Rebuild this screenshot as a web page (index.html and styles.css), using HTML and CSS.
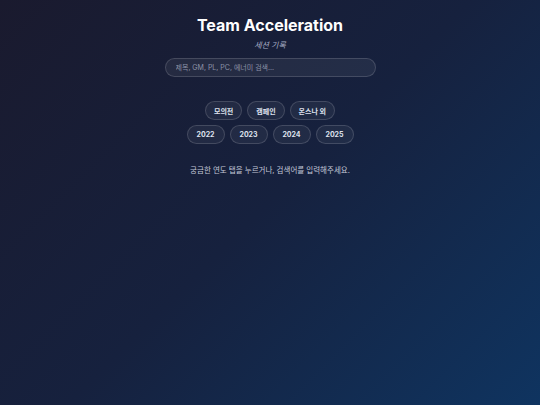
FILE: index.html
```html
<!DOCTYPE html>
<html lang="ko">
  <head>
    <meta charset="UTF-8" />
    <meta name="viewport" content="width=device-width, initial-scale=1.0" />
    <title>Team Acceleration</title>
    <link rel="stylesheet" href="styles.css">
  </head>
  <body>
    <div class="container">
      <h1>Team Acceleration</h1>
      <p class="subtitle">세션 기록</p>
      <input
        type="text"
        class="search"
        placeholder="제목, GM, PL, PC, 에너미 검색..."
      />

      <div class="tabs">
        <button class="tab">모의전</button>
        <button class="tab">캠페인</button>
        <button class="tab">몬스나 외</button>
      </div>
      <div class="tabs">
        <button class="tab">2022</button>
        <button class="tab">2023</button>
        <button class="tab">2024</button>
        <button class="tab">2025</button>
      </div>

      <p class="message">궁금한 연도 탭을 누르거나, 검색어를 입력해주세요.</p>
    </div>
  </body>
</html>
```

FILE: styles.css
```css
/* styles.css */
body {
  font-family: Inter, "Noto Sans CJK KR", sans-serif;
  margin: 0;
  padding: 0;
  min-height: 100vh;
  background: linear-gradient(135deg, #1a1a2e 0%, #16213e 50%, #0f3460 100%);
  color: #e8e8f0;
}

.container {
  display: flex;
  flex-direction: column;
  align-items: center;
  padding-top: 14px;
}

h1 {
  margin: 0;
  font-size: 16px;
  font-weight: 700;
  color: #ffffff;
  line-height: 22px;
}

.subtitle {
  margin: 3px 0 0;
  font-size: 8px;
  font-style: italic;
  color: #a9b0c6;
}

.search {
  box-sizing: border-box;
  width: 211px;
  height: 19px;
  margin-top: 8px;
  padding: 0 10px;
  font-family: inherit;
  font-size: 7px;
  color: #e8e8f0;
  background: rgba(255, 255, 255, 0.06);
  border: 1px solid rgba(255, 255, 255, 0.15);
  border-radius: 10px;
  outline: none;
}

.search::placeholder {
  color: #8d93a8;
}

.tabs {
  display: flex;
  gap: 5px;
  margin-top: 5px;
}

.tabs:first-of-type {
  margin-top: 24px;
}

.tab {
  height: 19px;
  padding: 0 8px;
  font-family: inherit;
  font-size: 7px;
  font-weight: 700;
  color: #dfe2ee;
  background: rgba(255, 255, 255, 0.05);
  border: 1px solid rgba(255, 255, 255, 0.15);
  border-radius: 10px;
  cursor: pointer;
}

.tabs:last-of-type .tab {
  min-width: 38px;
}

.message {
  margin: 20px 0 0;
  font-size: 7.5px;
  color: #c3c8d8;
}
```
